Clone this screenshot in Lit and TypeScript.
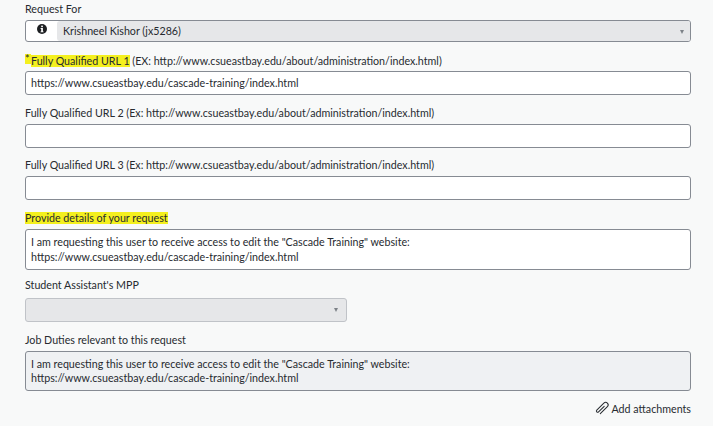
import { LitElement, html, css } from "lit";
import { customElement } from "lit/decorators.js";

const REQUEST = html`I am requesting this user to receive access to edit the "Cascade Training" website:<br />https://www.csueastbay.edu/cascade-training/index.html`;
const EX = "http://www.csueastbay.edu/about/administration/index.html";

@customElement("app-root")
export class AppRoot extends LitElement {
  static styles = css`
    :host {
      display: block;
      width: 713px;
      height: 426px;
      overflow: hidden;
      background: #f8f9f9;
      font-family: Lato, "Liberation Sans", sans-serif;
      font-size: 10.7px;
      color: #272b30;
    }
    .form {
      display: flex;
      flex-direction: column;
      padding: 2px 22px 0 25px;
    }
    .label {
      height: 14px;
      line-height: 14px;
      white-space: nowrap;
    }
    .hl {
      display: inline-block;
      height: 12px;
      line-height: 12px;
      background: #f4f01e;
    }
    .star {
      display: inline-block;
      height: 10px;
      width: 6px;
      line-height: 10px;
      vertical-align: 2px;
      background: #f4f01e;
    }
    .box {
      box-sizing: border-box;
      border: 1px solid #868b93;
      border-radius: 3px;
      background: #fff;
      padding: 0 5px;
      line-height: 14.5px;
    }
    .input {
      height: 24px;
      display: flex;
      align-items: center;
      margin-top: 4px;
    }
    .area {
      height: 41px;
      display: flex;
      align-items: center;
      margin-top: 4px;
    }
    .area.ro {
      height: 40px;
      background: #eff1f3;
    }
    .group {
      display: flex;
      height: 22px;
      margin-top: 4px;
      padding: 0;
      overflow: hidden;
    }
    .addon {
      width: 31px;
      display: flex;
      justify-content: center;
      padding-top: 3px;
      box-sizing: border-box;
    }
    .sel {
      flex: 1;
      display: flex;
      align-items: center;
      justify-content: space-between;
      padding: 1px 6px 0;
      background: #e6e7e9;
      border-radius: 3px 0 0 3px;
    }
    .mpp {
      width: 322px;
      height: 24px;
      margin-top: 6px;
      box-sizing: border-box;
      display: flex;
      align-items: center;
      justify-content: flex-end;
      padding-right: 8px;
      background: #e6e7e9;
      border: 1px solid #c0c3c8;
      border-radius: 3px;
    }
    .caret {
      width: 0;
      height: 0;
      border-left: 2.5px solid transparent;
      border-right: 2.5px solid transparent;
      border-top: 4px solid #7d8288;
    }
    .attach {
      display: flex;
      justify-content: flex-end;
      align-items: center;
      gap: 2px;
      margin-top: 10px;
      height: 14px;
    }
    .attach svg {
      overflow: visible;
    }
    .tight { margin-top: 3px; }
    .gap-12 { margin-top: 12px; }
    .gap-11 { margin-top: 11px; }
    .gap-10 { margin-top: 10px; }
    .gap-8 { margin-top: 8px; }
  `;

  render() {
    return html`
      <div class="form">
        <div class="label">Request For</div>
        <div class="box group">
          <div class="addon">
            <svg width="10" height="10" viewBox="0 0 10 10">
              <circle cx="5" cy="5" r="5" fill="#1d1f22" />
              <rect x="4.2" y="1.6" width="1.7" height="1.6" fill="#fff" />
              <path d="M3.6 4h2.3v3.4h.7v.9H3.5v-.9h.7V4.9h-.6z" fill="#fff" />
            </svg>
          </div>
          <div class="sel">
            <span>Krishneel Kishor (jx5286)</span><span class="caret"></span>
          </div>
        </div>

        <div class="label gap-12">
          <span class="star">*</span><span class="hl">Fully Qualified URL 1</span> (EX: ${EX})
        </div>
        <div class="box input tight">https://www.csueastbay.edu/cascade-training/index.html</div>

        <div class="label gap-11">Fully Qualified URL 2 (Ex: ${EX})</div>
        <div class="box input"></div>

        <div class="label gap-10">Fully Qualified URL 3 (Ex: ${EX})</div>
        <div class="box input"></div>

        <div class="label gap-11"><span class="hl">Provide details of your request</span></div>
        <div class="box area">
          <div>${REQUEST}</div>
        </div>

        <div class="label gap-8">Student Assistant's MPP</div>
        <div class="mpp"><span class="caret"></span></div>

        <div class="label gap-11">Job Duties relevant to this request</div>
        <div class="box area ro">
          <div>${REQUEST}</div>
        </div>

        <div class="attach">
          <svg width="13" height="12" viewBox="0 0 13 12" fill="none" stroke="#272b30" stroke-width="1" stroke-linecap="round">
            <g transform="translate(0 0.6) rotate(45 6.5 5.4)">
              <path d="M6.5 3V11a1.250 1.250 0 0 1-2.500 0V1a2.500 2.500 0 0 1 5 0V11" />
            </g>
          </svg>
          <span>Add attachments</span>
        </div>
      </div>
    `;
  }
}
